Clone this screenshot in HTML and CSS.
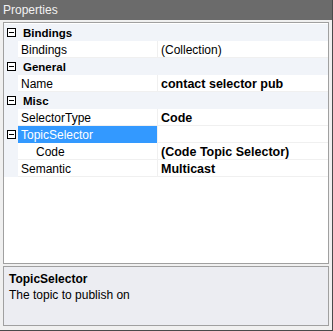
FILE: index.html
```html
<!DOCTYPE html>
<html lang="en">
<head>
  <meta charset="UTF-8" />
  <title>Properties</title>
  <link rel="stylesheet" href="styles.css">
</head>
<body>
  <div class="window">
    <div class="titlebar">Properties</div>

    <div class="panel">
      <!-- Property grid -->
      <div class="grid">
        <div class="row category">
          <span class="toggle"></span>
          <span class="cat-name">Bindings</span>
        </div>
        <div class="row prop">
          <span class="margin"></span>
          <span class="name">Bindings</span>
          <span class="value">(Collection)</span>
        </div>

        <div class="row category">
          <span class="toggle"></span>
          <span class="cat-name">General</span>
        </div>
        <div class="row prop">
          <span class="margin"></span>
          <span class="name">Name</span>
          <span class="value bold">contact selector pub</span>
        </div>

        <div class="row category">
          <span class="toggle"></span>
          <span class="cat-name">Misc</span>
        </div>
        <div class="row prop">
          <span class="margin"></span>
          <span class="name">SelectorType</span>
          <span class="value bold">Code</span>
        </div>
        <div class="row prop">
          <span class="margin"><span class="toggle"></span></span>
          <span class="name selected">TopicSelector</span>
          <span class="value"></span>
        </div>
        <div class="row prop">
          <span class="margin"></span>
          <span class="name nested">Code</span>
          <span class="value bold">(Code Topic Selector)</span>
        </div>
        <div class="row prop">
          <span class="margin"></span>
          <span class="name">Semantic</span>
          <span class="value bold">Multicast</span>
        </div>
      </div>

      <!-- Description box -->
      <div class="help">
        <div class="help-title">TopicSelector</div>
        <div class="help-text">The topic to publish on</div>
      </div>
    </div>
  </div>
</body>
</html>
```

FILE: styles.css
```css
* {
  margin: 0;
  padding: 0;
  box-sizing: border-box;
}

body {
  background: #f0f0f0;
  font-family: "Liberation Sans", Arial, sans-serif;
  font-size: 12px;
  color: #000;
}

.window {
  width: 333px;
  height: 331px;
  display: flex;
  flex-direction: column;
  border-right: 1px solid #4a4a4a;
  border-bottom: 1px solid #4a4a4a;
}

.titlebar {
  height: 20px;
  background: #6b6b6b;
  color: #f2f2f2;
  font-size: 12px;
  line-height: 21px;
  padding-left: 3px;
}

.panel {
  flex: 1;
  display: flex;
  flex-direction: column;
  gap: 2px;
  padding: 2px 3px 4px 3px;
  background: #f0f0f0;
}

/* Property grid */
.grid {
  flex: 1;
  background: #fff;
  border: 1px solid #a0a0a0;
  padding-top: 1px;
}

.row {
  height: 17px;
  display: flex;
  align-items: stretch;
}

.category {
  background: #f1f4f9;
  align-items: center;
}

.cat-name {
  font-weight: bold;
  font-size: 11.5px;
  padding-left: 7px;
  padding-top: 1px;
}

.toggle {
  position: relative;
  display: block;
  width: 9px;
  height: 9px;
  margin-left: 3px;
  border: 1px solid #000;
  background: #fff;
}

/* minus sign inside the toggle box */
.toggle::after {
  content: "";
  position: absolute;
  left: 1px;
  top: 3px;
  width: 5px;
  height: 1px;
  background: #000;
}

.margin {
  width: 14px;
  background: #f1f4f9;
  display: flex;
  align-items: center;
}

.name {
  width: 139px;
  padding: 1px 0 0 3px;
  line-height: 16px;
  border-bottom: 1px solid #f0f0f0;
  white-space: nowrap;
}

.name.nested {
  padding-left: 18px;
}

.name.selected {
  background: #3399ff;
  color: #fff;
  border-bottom-color: #3399ff;
}

.value {
  flex: 1;
  padding: 1px 0 0 3px;
  line-height: 16px;
  border-left: 1px solid #f0f0f0;
  border-bottom: 1px solid #f0f0f0;
  white-space: nowrap;
}

.bold {
  font-weight: bold;
  font-size: 12.5px;
}

/* Description box */
.help {
  height: 60px;
  background: #ecedf2;
  border: 1px solid #a0a0a0;
  padding: 4px 5px;
}

.help-title {
  font-weight: bold;
  line-height: 16px;
}

.help-text {
  line-height: 16px;
}
```
